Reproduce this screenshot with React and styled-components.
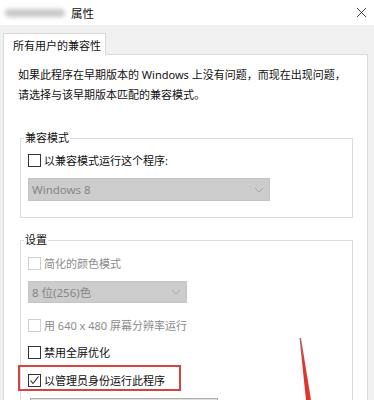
import React from "react";
import styled, { createGlobalStyle } from "styled-components";

const GlobalStyle = createGlobalStyle`
  body {
    margin: 0;
    background: #f0f0f0;
    font-family: "Noto Sans", "Noto Sans CJK SC", sans-serif;
  }
`;

export default function App() {
  return (
    <Window>
      <GlobalStyle />
      <TitleBar>
        <TitleText>
          <Blurred />
          属性
        </TitleText>
        <CloseIcon viewBox="0 0 12 12">
          <path d="M1 1 L11 11 M11 1 L1 11" stroke="#333" strokeWidth="1" />
        </CloseIcon>
      </TitleBar>

      <TabStrip>
        <Tab>所有用户的兼容性</Tab>
      </TabStrip>

      <Panel>
        <Intro>
          如果此程序在早期版本的 Windows 上没有问题，而现在出现问题，
          <br />
          请选择与该早期版本匹配的兼容模式。
        </Intro>

        <Group>
          <Legend>兼容模式</Legend>
          <CheckRow>
            <Box />
            以兼容模式运行这个程序:
          </CheckRow>
          <Select width={242} height={23}>
            Windows 8
            <Chevron />
          </Select>
        </Group>

        <Group $gap={14} $top={6}>
          <Legend>设置</Legend>
          <CheckRow disabled>
            <Box disabled />
            简化的颜色模式
          </CheckRow>
          <Select width={159} height={22}>
            8 位(256)色
            <Chevron />
          </Select>
          <CheckRow disabled $space={13}>
            <Box disabled />用 640 x 480 屏幕分辨率运行
          </CheckRow>
          <CheckRow $space={9}>
            <Box />
            禁用全屏优化
          </CheckRow>
          <CheckRow $space={10} $highlight>
            <Box>
              <CheckIcon viewBox="0 0 11 11">
                <polyline points="1.5,5.5 4,8.5 9.5,1.5" fill="none" stroke="#222" strokeWidth="1.1" />
              </CheckIcon>
            </Box>
            以管理员身份运行此程序
          </CheckRow>
          <Button />
        </Group>
      </Panel>

      <Arrow viewBox="0 0 374 400">
        <defs>
          <linearGradient id="arrowFade" x1="0" y1="0" x2="0" y2="1">
            <stop offset="0" stopColor="#a07070" />
            <stop offset="0.4" stopColor="#d83a32" />
            <stop offset="1" stopColor="#e3342b" />
          </linearGradient>
        </defs>
        <polygon points="299.5,338 301,338 311,400 306,400" fill="url(#arrowFade)" />
      </Arrow>
    </Window>
  );
}

function Chevron() {
  return (
    <ChevronIcon viewBox="0 0 10 6">
      <polyline points="1,1 5,5 9,1" fill="none" stroke="#a8a8a8" strokeWidth="1" />
    </ChevronIcon>
  );
}

const Window = styled.div`
  position: relative;
  width: 374px;
  height: 400px;
  overflow: hidden;
  background: #f0f0f0;
  color: #111;
  font-size: 11px;
`;

const TitleBar = styled.div`
  height: 25px;
  background: #fff;
  display: flex;
  align-items: center;
  justify-content: space-between;
  padding: 0 7px 0 5px;
  box-sizing: border-box;
`;

const TitleText = styled.div`
  display: flex;
  align-items: center;
  gap: 6px;
  font-size: 11.5px;
  color: #111;
`;

const Blurred = styled.span`
  display: inline-block;
  width: 60px;
  height: 8px;
  border-radius: 4px;
  background: #c8c8c8;
  filter: blur(2px);
`;

const CloseIcon = styled.svg`
  width: 11px;
  height: 11px;
`;

const TabStrip = styled.div`
  display: flex;
  padding: 8px 0 0 3px;
`;

const Tab = styled.div`
  position: relative;
  z-index: 1;
  height: 22px;
  width: 103px;
  box-sizing: border-box;
  display: flex;
  align-items: center;
  padding-left: 9px;
  background: #fff;
  border: 1px solid #d9d9d9;
  border-bottom: none;
  margin-bottom: -1px;
`;

const Panel = styled.div`
  margin: 0 6px 0 3px;
  height: 400px;
  background: #fff;
  border: 1px solid #d9d9d9;
  padding: 10px 14px 0 14px;
`;

const Intro = styled.p`
  margin: 0;
  line-height: 20px;
`;

const Group = styled.fieldset`
  margin: ${(p) => p.$gap ?? 25}px 0 0 2px;
  padding: ${(p) => p.$top ?? 5}px 8px 16px 7px;
  border: 1px solid #dcdcdc;
  min-width: 0;
`;

const Legend = styled.legend`
  margin-left: -4px;
  padding: 0 1px;
  line-height: 16px;
`;

const CheckRow = styled.div`
  position: relative;
  display: flex;
  align-items: center;
  gap: 3px;
  height: 18px;
  margin-top: ${(p) => p.$space ?? 0}px;
  color: ${(p) => (p.disabled ? "#8c8c8c" : "#111")};

  ${(p) =>
    p.$highlight &&
    `
    &::after {
      content: "";
      position: absolute;
      left: -10px;
      top: -6px;
      width: 159px;
      height: 22px;
      border: 2px solid #d4433f;
    }
  `}
`;

const Box = styled.span`
  display: flex;
  align-items: center;
  justify-content: center;
  width: 13px;
  height: 13px;
  box-sizing: border-box;
  border: 1px solid ${(p) => (p.disabled ? "#cfcfcf" : "#333")};
  background: #fff;
  flex: none;
`;

const CheckIcon = styled.svg`
  width: 11px;
  height: 11px;
`;

const Select = styled.div`
  margin-top: 9px;
  width: ${(p) => p.width}px;
  height: ${(p) => p.height}px;
  box-sizing: border-box;
  background: #cccccc;
  border: 1px solid #c4c4c4;
  display: flex;
  align-items: center;
  justify-content: space-between;
  padding: 0 5px 0 3px;
  color: #858585;
  font-size: 11.5px;
`;

const ChevronIcon = styled.svg`
  width: 10px;
  height: 6px;
`;

const Button = styled.div`
  margin: 9px 0 0 2px;
  width: 188px;
  height: 22px;
  box-sizing: border-box;
  background: #e1e1e1;
  border: 1px solid #adadad;
`;

const Arrow = styled.svg`
  position: absolute;
  left: 0;
  top: 0;
  width: 374px;
  height: 400px;
  pointer-events: none;
`;
